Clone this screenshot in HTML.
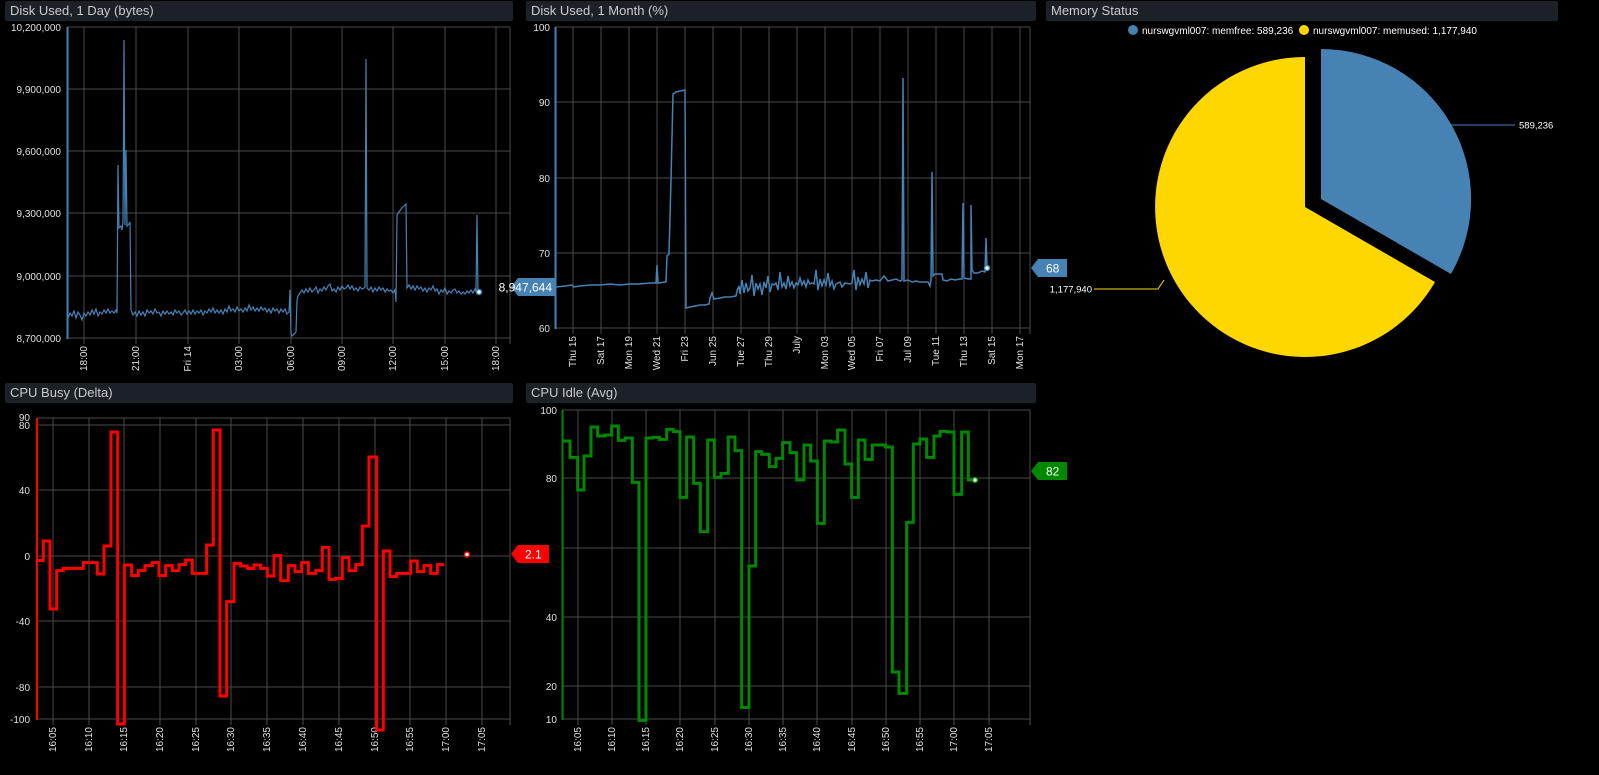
<!DOCTYPE html>
<html><head><meta charset="utf-8"><style>
html,body{margin:0;padding:0;background:#000;width:1599px;height:775px;overflow:hidden}
svg{display:block}
text{font-family:"Liberation Sans",sans-serif}
.h{fill:#1b2127}
.ht{fill:#c8ccd0;font-size:13px}
.g{stroke:#4a4a4a;stroke-width:1;fill:none}
.l{fill:#e0e0e0;font-size:10px}
</style></head><body>
<svg width="1599" height="775" viewBox="0 0 1599 775">
<!-- headers -->
<rect class="h" x="5" y="1" width="508" height="20" rx="2"/><text class="ht" x="10" y="15">Disk Used, 1 Day (bytes)</text>
<rect class="h" x="526" y="1" width="510" height="20" rx="2"/><text class="ht" x="531" y="15">Disk Used, 1 Month (%)</text>
<rect class="h" x="1046" y="1" width="512" height="20" rx="2"/><text class="ht" x="1051" y="15">Memory Status</text>
<rect class="h" x="5" y="383" width="508" height="20" rx="2"/><text class="ht" x="10" y="397">CPU Busy (Delta)</text>
<rect class="h" x="526" y="383" width="510" height="20" rx="2"/><text class="ht" x="531" y="397">CPU Idle (Avg)</text>

<!-- Chart 1 -->
<g class="g">
<path d="M67 27H510M67 89H510M67 151H510M67 213H510M67 276H510M67 338H510"/>
<path d="M84 27V344M136 27V344M188 27V344M239 27V344M291 27V344M342 27V344M393 27V344M445 27V344M496 27V344M510 27V344"/>
</g>
<line x1="67.5" y1="27" x2="67.5" y2="339" stroke="#4682b4" stroke-width="2"/>
<g class="l" text-anchor="end">
<text x="61" y="31">10,200,000</text><text x="61" y="93">9,900,000</text><text x="61" y="155">9,600,000</text><text x="61" y="217">9,300,000</text><text x="61" y="280">9,000,000</text><text x="61" y="342">8,700,000</text>
</g>
<g class="l" text-anchor="end">
<text transform="translate(87,346) rotate(-90)">18:00</text><text transform="translate(139,346) rotate(-90)">21:00</text><text transform="translate(191,346) rotate(-90)">Fri 14</text><text transform="translate(242,346) rotate(-90)">03:00</text><text transform="translate(294,346) rotate(-90)">06:00</text><text transform="translate(345,346) rotate(-90)">09:00</text><text transform="translate(396,346) rotate(-90)">12:00</text><text transform="translate(448,346) rotate(-90)">15:00</text><text transform="translate(499,346) rotate(-90)">18:00</text>
</g>
<polyline fill="none" stroke="#4682b4" stroke-width="1.2" points="68,318 70,313 72,316 74,311 76,318 78,312 80,315 82,320 84,313 86,316 88,312 90,315 92,310 94,314 96,309 98,316 100,312 102,314 104,310 106,313 108,309 110,313 112,311 114,313 116,310 117,313 118,165 119,228 121,226 122,230 123,222 124,40 125,225 126,150 127,226 129,224 130,222 131,310 133,315 135,312 137,316 139,311 141,315 143,312 145,316 147,310 149,313 151,311 153,314 155,309 157,313 159,312 161,316 163,311 165,314 167,311 169,314 171,312 173,315 175,310 177,313 179,311 181,315 183,313 185,310 187,314 189,311 191,314 193,310 195,314 197,311 199,313 201,310 203,315 205,311 207,313 209,309 211,312 213,308 215,313 217,310 219,313 221,310 223,314 225,309 227,312 229,306 231,311 233,309 235,312 237,307 239,311 241,309 243,312 245,308 247,311 249,305 251,310 253,307 255,311 257,308 259,311 261,307 263,310 265,308 267,312 269,309 271,313 273,308 275,311 277,309 279,313 281,309 283,312 285,309 287,314 289,312 290,290 291,334 292,336 296,332 297,300 298,296 300,293 302,290 304,293 306,289 308,292 310,288 312,292 314,290 316,287 318,293 320,289 322,291 324,287 326,290 328,286 330,284 332,291 334,289 336,292 338,287 340,290 342,286 344,289 346,288 348,285 350,289 352,286 354,290 356,288 358,291 360,287 362,289 364,288 365,287 366,59 367,288 369,290 371,287 373,292 375,288 377,291 379,287 381,290 383,288 385,292 387,289 389,291 391,290 393,293 395,290 396,302 397,215 399,212 401,209 403,207 405,205 406,204 407,288 409,285 411,289 413,286 415,290 417,286 419,289 421,287 423,291 425,288 427,292 429,288 431,290 433,286 435,291 437,289 439,294 441,290 443,292 445,288 447,294 449,291 451,293 453,290 455,289 457,293 459,291 461,294 463,292 465,294 467,291 469,293 471,290 473,293 475,289 476,292 477,215 478,292 479,292"/>
<circle cx="479" cy="292" r="2.5" fill="#fff" stroke="#4682b4" stroke-width="1.5"/>

<!-- Chart 2 -->
<g class="g">
<path d="M555 27H1030M555 102H1030M555 178H1030M555 253H1030M555 328H1030"/>
<path d="M573 27V334M601 27V334M629 27V334M657 27V334M685 27V334M713 27V334M741 27V334M769 27V334M797 27V334M825 27V334M852 27V334M880 27V334M908 27V334M936 27V334M964 27V334M992 27V334M1020 27V334M1030 27V334"/>
</g>
<line x1="555.5" y1="27" x2="555.5" y2="329" stroke="#4682b4" stroke-width="2"/>
<g class="l" text-anchor="end">
<text x="550" y="31">100</text><text x="550" y="106">90</text><text x="550" y="182">80</text><text x="550" y="257">70</text><text x="550" y="332">60</text>
</g>
<g class="l" text-anchor="end">
<text transform="translate(576,336) rotate(-90)">Thu 15</text><text transform="translate(604,336) rotate(-90)">Sat 17</text><text transform="translate(632,336) rotate(-90)">Mon 19</text><text transform="translate(660,336) rotate(-90)">Wed 21</text><text transform="translate(688,336) rotate(-90)">Fri 23</text><text transform="translate(716,336) rotate(-90)">Jun 25</text><text transform="translate(744,336) rotate(-90)">Tue 27</text><text transform="translate(772,336) rotate(-90)">Thu 29</text><text transform="translate(800,336) rotate(-90)">July</text><text transform="translate(828,336) rotate(-90)">Mon 03</text><text transform="translate(855,336) rotate(-90)">Wed 05</text><text transform="translate(883,336) rotate(-90)">Fri 07</text><text transform="translate(911,336) rotate(-90)">Jul 09</text><text transform="translate(939,336) rotate(-90)">Tue 11</text><text transform="translate(967,336) rotate(-90)">Thu 13</text><text transform="translate(995,336) rotate(-90)">Sat 15</text><text transform="translate(1023,336) rotate(-90)">Mon 17</text>
</g>
<polyline fill="none" stroke="#4682b4" stroke-width="1.5" points="556,287 565,286 572,285 574,287 580,286 590,285 600,285 610,284 620,285 630,284 640,284 650,283 656,283 657,265 658,283 666,282 667,256 669,254 671,180 673,94 676,92 680,91 685,90 686,308 690,307 695,306 700,305 705,305 709,304 710,298 712,293 714,299 720,298 725,297 730,297 736,296 737,291 739,286 740,294 742,280 744,293 746,283 748,291 750,288 752,275 754,296 756,283 758,289 760,284 762,295 764,282 766,288 768,276 770,292 772,284 774,285 776,283 778,290 780,272 782,287 784,283 786,289 788,276 790,286 792,282 794,288 796,283 798,285 800,278 802,285 804,281 806,287 808,280 810,284 812,283 814,284 816,270 818,290 820,279 822,286 824,280 826,285 828,273 830,286 832,281 834,289 836,284 838,283 840,282 842,287 845,283 850,284 852,283 854,270 856,290 858,277 860,285 862,279 864,284 866,272 868,288 870,280 872,281 876,280 880,281 884,276 888,281 892,280 896,279 900,281 902,280 903,78 904,281 908,280 912,282 916,281 920,282 924,282 928,282 930,286 931,280 932,172 933,276 935,274 940,274 942,274 943,280 947,281 951,279 955,280 960,279 962,279 963,203 964,278 968,279 971,279 971,205 972,270 974,273 978,273 982,271 985,272 986,238 987,268"/>
<circle cx="987" cy="268" r="2.5" fill="#fff" stroke="#4682b4" stroke-width="1.5"/>

<!-- Chart 4 CPU Busy -->
<g class="g">
<path d="M37 418H510M37 425H510M37 490H510M37 556H510M37 621H510M37 687H510M37 719H510"/>
<path d="M53 418V725M89 418V725M124 418V725M160 418V725M196 418V725M231 418V725M267 418V725M303 418V725M339 418V725M375 418V725M410 418V725M446 418V725M482 418V725M510 418V725"/>
</g>
<line x1="37" y1="418" x2="37" y2="720" stroke="#f00" stroke-width="2"/>
<g class="l" text-anchor="end">
<text x="30" y="421">90</text><text x="30" y="429">80</text><text x="30" y="494">40</text><text x="30" y="560">0</text><text x="30" y="625">-40</text><text x="30" y="691">-80</text><text x="30" y="723">-100</text>
</g>
<g class="l" text-anchor="end">
<text transform="translate(56,727) rotate(-90)">16:05</text><text transform="translate(92,727) rotate(-90)">16:10</text><text transform="translate(127,727) rotate(-90)">16:15</text><text transform="translate(163,727) rotate(-90)">16:20</text><text transform="translate(199,727) rotate(-90)">16:25</text><text transform="translate(234,727) rotate(-90)">16:30</text><text transform="translate(270,727) rotate(-90)">16:35</text><text transform="translate(306,727) rotate(-90)">16:40</text><text transform="translate(342,727) rotate(-90)">16:45</text><text transform="translate(378,727) rotate(-90)">16:50</text><text transform="translate(413,727) rotate(-90)">16:55</text><text transform="translate(449,727) rotate(-90)">17:00</text><text transform="translate(485,727) rotate(-90)">17:05</text>
</g>
<g transform="translate(0,400) scale(0.33333)">
<polyline fill="none" stroke="#f00" stroke-width="9" points="107,482 130,482 130,423 150,423 150,627 170,627 170,512 190,512 190,505 250,505 250,488 292,488 292,522 312,522 312,438 333,438 333,96 353,96 353,972 373,972 373,495 395,495 395,527 415,527 415,512 435,512 435,497 457,497 457,488 477,488 477,527 497,527 497,497 517,497 517,512 537,512 537,494 557,494 557,480 577,480 577,520 620,520 620,435 640,435 640,90 660,90 660,888 680,888 680,605 702,605 702,490 722,490 722,498 742,498 742,505 762,505 762,495 782,495 782,505 802,505 802,528 822,528 822,467 842,467 842,542 865,542 865,497 885,497 885,515 905,515 905,488 925,488 925,520 947,520 947,512 967,512 967,442 987,442 987,538 1007,538 1007,535 1027,535 1027,473 1047,473 1047,512 1067,512 1067,494 1087,494 1087,378 1107,378 1107,171 1130,171 1130,990 1150,990 1150,453 1170,453 1170,530 1190,530 1190,520 1232,520 1232,483 1252,483 1252,515 1272,515 1272,497 1292,497 1292,520 1312,520 1312,494 1333,494"/>
</g>
<circle cx="467" cy="554.5" r="2.5" fill="#fff" stroke="#f00" stroke-width="1.5"/>

<!-- Chart 5 CPU Idle -->
<g class="g">
<path d="M562 410H1030M562 478H1030M562 548H1030M562 617H1030M562 686H1030M562 719H1030"/>
<path d="M578 410V725M612 410V725M646 410V725M680 410V725M715 410V725M749 410V725M783 410V725M817 410V725M852 410V725M886 410V725M920 410V725M954 410V725M989 410V725M1030 410V725"/>
</g>
<line x1="562.5" y1="410" x2="562.5" y2="720" stroke="#080" stroke-width="2"/>
<g class="l" text-anchor="end">
<text x="557" y="414">100</text><text x="557" y="482">80</text><text x="557" y="621">40</text><text x="557" y="690">20</text><text x="557" y="723">10</text>
</g>
<g class="l" text-anchor="end">
<text transform="translate(581,727) rotate(-90)">16:05</text><text transform="translate(615,727) rotate(-90)">16:10</text><text transform="translate(649,727) rotate(-90)">16:15</text><text transform="translate(683,727) rotate(-90)">16:20</text><text transform="translate(718,727) rotate(-90)">16:25</text><text transform="translate(752,727) rotate(-90)">16:30</text><text transform="translate(786,727) rotate(-90)">16:35</text><text transform="translate(820,727) rotate(-90)">16:40</text><text transform="translate(855,727) rotate(-90)">16:45</text><text transform="translate(889,727) rotate(-90)">16:50</text><text transform="translate(923,727) rotate(-90)">16:55</text><text transform="translate(957,727) rotate(-90)">17:00</text><text transform="translate(992,727) rotate(-90)">17:05</text>
</g>
<g transform="translate(520,380) scale(0.33333)">
<polyline fill="none" stroke="#080" stroke-width="9" points="130,183 150,183 150,232 173,232 173,330 192,330 192,228 213,228 213,141 233,141 233,168 255,168 255,165 275,165 275,138 295,138 295,181 315,181 315,174 337,174 337,307 357,307 357,1021 378,1021 378,174 398,174 398,172 418,172 418,178 440,178 440,148 460,148 460,155 480,155 480,352 500,352 500,171 521,171 521,310 541,310 541,455 563,455 563,180 583,180 583,292 603,292 603,280 625,280 625,171 645,171 645,212 665,212 665,982 687,982 687,558 707,558 707,215 725,215 725,223 748,223 748,260 768,260 768,235 788,235 788,188 810,188 810,218 830,218 830,300 852,300 852,195 872,195 872,243 892,243 892,430 913,430 913,183 933,183 933,186 953,186 953,150 975,150 975,252 995,252 995,352 1015,352 1015,180 1035,180 1035,238 1057,238 1057,195 1097,195 1097,201 1117,201 1117,876 1137,876 1137,940 1160,940 1160,427 1180,427 1180,192 1200,192 1200,177 1220,177 1220,232 1242,232 1242,168 1260,168 1260,154 1282,154 1282,156 1302,156 1302,343 1325,343 1325,156 1345,156 1345,300 1365,300"/>
</g>
<circle cx="975" cy="480" r="2.5" fill="#fff" stroke="#080" stroke-width="1.5"/>

<!-- badges -->
<path d="M511 287 L518 278 H556 V296 H518 Z" fill="#4682b4"/><text x="552" y="291.5" text-anchor="end" fill="#fff" font-size="12">8,947,644</text>
<path d="M1031 268 L1038 259 H1067 V277 H1038 Z" fill="#4682b4"/><text x="1046" y="272.5" fill="#fff" font-size="12">68</text>
<path d="M511 554 L518 545 H549 V563 H518 Z" fill="#f00"/><text x="525" y="558.5" fill="#fff" font-size="12">2.1</text>
<path d="M1031 471 L1038 462 H1067 V480 H1038 Z" fill="#080"/><text x="1046" y="475.5" fill="#fff" font-size="12">82</text>

<!-- pie -->
<circle cx="1133" cy="30" r="5" fill="#4682b4"/><text x="1142" y="34" fill="#fff" font-size="10">nurswgvml007: memfree: 589,236</text>
<circle cx="1304" cy="30" r="5" fill="#ffd700"/><text x="1313" y="34" fill="#fff" font-size="10">nurswgvml007: memused: 1,177,940</text>
<path d="M1305 207 L1435 282 A150 150 0 1 1 1305 57 Z" fill="#ffd700"/>
<path d="M1321 199 L1321 49 A150 150 0 0 1 1451 274 Z" fill="#4682b4"/>
<path d="M1445 125 H1515" stroke="#4682b4" fill="none"/><text x="1519" y="128.5" fill="#fff" font-size="9.5">589,236</text>
<path d="M1164 280 L1158 289 H1094" stroke="#ffd700" fill="none"/><text x="1092" y="292.5" text-anchor="end" fill="#fff" font-size="9.5">1,177,940</text>
</svg>
</body></html>
